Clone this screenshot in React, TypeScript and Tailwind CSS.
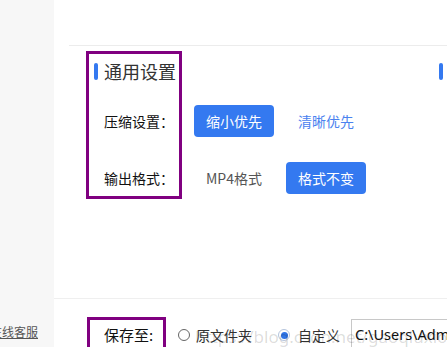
import React from "react";

const cjk = { fontFamily: "'Noto Sans CJK SC', 'Noto Sans', sans-serif" };

export default function App() {
  return (
    <div className="relative flex w-[447px] h-[347px] overflow-hidden bg-white" style={cjk}>
      {/* sidebar */}
      <div className="w-[54px] shrink-0 bg-[#f7f7f7] flex flex-col justify-end pb-[7px]">
        <div className="ml-[-10px] whitespace-nowrap text-[12px] leading-[16px] text-[#555] underline">
          在线客服
        </div>
      </div>

      {/* main */}
      <div className="w-[393px] shrink-0 flex flex-col">
        <div className="h-[45px] shrink-0" />
        <div className="ml-[15px] border-t border-[#ececec]" />
        <div className="h-[252px] shrink-0 flex pl-[40px] pt-[13px]">
          <div className="w-[345px] shrink-0 flex flex-col">
            <div className="flex items-center h-[24px]">
              <div className="w-[4px] h-[17px] shrink-0 rounded-full bg-[#3479f0]" />
              <div className="ml-[6px] text-[18px] leading-[24px] text-[#333]">通用设置</div>
            </div>
            <div className="flex items-center mt-[22px] pl-[10px]">
              <div className="w-[90px] shrink-0 text-[14px] text-[#111]">压缩设置：</div>
              <div className="flex gap-[12px]">
                <div className="w-[80px] h-[32px] shrink-0 rounded-[4px] bg-[#3479f0] text-white text-[14px] flex items-center justify-center">缩小优先</div>
                <div className="w-[80px] h-[32px] shrink-0 rounded-[4px] text-[#4a82ef] text-[14px] flex items-center justify-center">清晰优先</div>
              </div>
            </div>
            <div className="flex items-center mt-[25px] pl-[10px]">
              <div className="w-[90px] shrink-0 text-[14px] text-[#111]">输出格式：</div>
              <div className="flex gap-[12px]">
                <div className="w-[80px] h-[32px] shrink-0 rounded-[4px] text-[#555] text-[14px] flex items-center justify-center">MP4格式</div>
                <div className="w-[80px] h-[32px] shrink-0 rounded-[4px] bg-[#3479f0] text-white text-[14px] flex items-center justify-center">格式不变</div>
              </div>
            </div>
          </div>
          <div className="shrink-0 flex items-start">
            <div className="flex items-center h-[24px]">
              <div className="w-[4px] h-[17px] shrink-0 rounded-full bg-[#3479f0]" />
              <div className="ml-[6px] text-[18px] leading-[24px] text-[#333] whitespace-nowrap">输出设置</div>
            </div>
          </div>
        </div>
        <div className="border-t border-[#efefef]" />
        <div className="flex items-center pt-[20px] pl-[50px] whitespace-nowrap">
          <div className="w-[74px] shrink-0 text-[15px] text-[#111] leading-[32px]">保存至:</div>
          <div className="flex items-center h-[32px] shrink-0">
            <div className="w-[12px] h-[12px] shrink-0 rounded-full border border-[#666] bg-white" />
            <div className="ml-[6px] text-[14px] text-[#333]">原文件夹</div>
          </div>
          <div className="flex items-center h-[32px] ml-[26px] shrink-0">
            <div className="w-[12px] h-[12px] shrink-0 rounded-full border border-[#b5c4dc] bg-white flex items-center justify-center">
              <div className="w-[7px] h-[7px] rounded-full bg-[#2f74e6]" />
            </div>
            <div className="ml-[8px] text-[14px] text-[#333]">自定义</div>
          </div>
          <div className="ml-[11px] h-[32px] w-[140px] shrink-0 overflow-hidden border border-[#c8c8c8] bg-white flex items-center pl-[3px] text-[14.5px] text-[#111]" style={{ fontFamily: "'Noto Sans', sans-serif" }}>
            C:\Users\Administrator
          </div>
        </div>
      </div>

      {/* watermark */}
      <div className="absolute left-[195px] top-[324px] text-[17px] text-black/15 whitespace-nowrap pointer-events-none" style={{ fontFamily: "'Noto Sans', sans-serif" }}>
        https://blog.csdn.net/gaoqiuxiongqi
      </div>

      {/* annotation boxes */}
      <div className="absolute left-[86px] top-[51px] w-[96px] h-[148px] border-[3px] border-[#800080] pointer-events-none" />
      <div className="absolute left-[87px] top-[317px] w-[79px] h-[40px] border-[3px] border-[#800080] pointer-events-none" />
    </div>
  );
}
